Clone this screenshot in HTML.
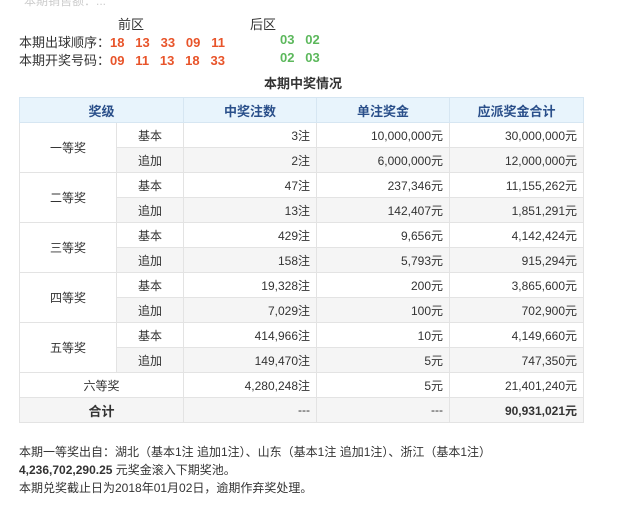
<!DOCTYPE html>
<html><head><meta charset="utf-8"><style>
body{margin:0;background:#fff;font-family:"Liberation Sans","Noto Sans CJK SC",sans-serif;font-size:12px;color:#333;width:617px;height:505px;overflow:hidden;position:relative}
.a{position:absolute;white-space:nowrap}
.r{color:#e8542a;font-weight:bold}
.g{color:#5cb85c;font-weight:bold}
table{position:absolute;left:19px;top:97px;border-collapse:collapse;width:564px;table-layout:fixed}
td,th{border:1px solid #e3e3e3;height:24px;padding:0 6px;font-weight:normal}
th{background:#e8f4fc;color:#2a4f8a;font-weight:bold;font-size:13px;border-color:#d6e6f2}
td{text-align:right}
td.c{text-align:center}
tr.z td.s,tr.z td.n{background:#f5f5f5}
tr.t td{background:#f5f5f5}
</style></head><body>
<div class="a" style="left:24px;top:-8px;color:#ccc">本期销售额：...</div>
<div class="a" style="left:118px;top:14px;font-size:13px">前区</div>
<div class="a" style="left:250px;top:14px;font-size:13px">后区</div>
<div class="a" style="left:19px;top:32px;font-size:13px">本期出球顺序：<span class="r">18&nbsp;&nbsp;&nbsp;13&nbsp;&nbsp;&nbsp;33&nbsp;&nbsp;&nbsp;09&nbsp;&nbsp;&nbsp;11</span></div>
<div class="a g" style="left:280px;top:32px;font-size:13px">03&nbsp;&nbsp;&nbsp;02</div>
<div class="a" style="left:19px;top:50px;font-size:13px">本期开奖号码：<span class="r">09&nbsp;&nbsp;&nbsp;11&nbsp;&nbsp;&nbsp;13&nbsp;&nbsp;&nbsp;18&nbsp;&nbsp;&nbsp;33</span></div>
<div class="a g" style="left:280px;top:50px;font-size:13px">02&nbsp;&nbsp;&nbsp;03</div>
<div class="a" style="left:264px;top:73px;font-weight:bold;font-size:13px">本期中奖情况</div>
<table>
<colgroup><col style="width:97px"><col style="width:67px"><col style="width:133px"><col style="width:133px"><col style="width:134px"></colgroup>
<tr><th colspan="2">奖级</th><th>中奖注数</th><th>单注奖金</th><th>应派奖金合计</th></tr>
<tr><td class="c" rowspan="2">一等奖</td><td class="c s">基本</td><td class="n">3注</td><td class="n">10,000,000元</td><td class="n">30,000,000元</td></tr>
<tr class="z"><td class="c s">追加</td><td class="n">2注</td><td class="n">6,000,000元</td><td class="n">12,000,000元</td></tr>
<tr><td class="c" rowspan="2">二等奖</td><td class="c s">基本</td><td class="n">47注</td><td class="n">237,346元</td><td class="n">11,155,262元</td></tr>
<tr class="z"><td class="c s">追加</td><td class="n">13注</td><td class="n">142,407元</td><td class="n">1,851,291元</td></tr>
<tr><td class="c" rowspan="2">三等奖</td><td class="c s">基本</td><td class="n">429注</td><td class="n">9,656元</td><td class="n">4,142,424元</td></tr>
<tr class="z"><td class="c s">追加</td><td class="n">158注</td><td class="n">5,793元</td><td class="n">915,294元</td></tr>
<tr><td class="c" rowspan="2">四等奖</td><td class="c s">基本</td><td class="n">19,328注</td><td class="n">200元</td><td class="n">3,865,600元</td></tr>
<tr class="z"><td class="c s">追加</td><td class="n">7,029注</td><td class="n">100元</td><td class="n">702,900元</td></tr>
<tr><td class="c" rowspan="2">五等奖</td><td class="c s">基本</td><td class="n">414,966注</td><td class="n">10元</td><td class="n">4,149,660元</td></tr>
<tr class="z"><td class="c s">追加</td><td class="n">149,470注</td><td class="n">5元</td><td class="n">747,350元</td></tr>
<tr><td class="c" colspan="2">六等奖</td><td>4,280,248注</td><td>5元</td><td>21,401,240元</td></tr>
<tr class="t"><td class="c" colspan="2" style="font-weight:bold;font-size:13px">合计</td><td>---</td><td>---</td><td style="font-weight:bold">90,931,021元</td></tr>
</table>
<div class="a" style="left:19px;top:443px">本期一等奖出自：湖北（基本1注 追加1注）、山东（基本1注 追加1注）、浙江（基本1注）</div>
<div class="a" style="left:19px;top:461px"><b>4,236,702,290.25</b> 元奖金滚入下期奖池。</div>
<div class="a" style="left:19px;top:479px">本期兑奖截止日为2018年01月02日，逾期作弃奖处理。</div>
</body></html>
